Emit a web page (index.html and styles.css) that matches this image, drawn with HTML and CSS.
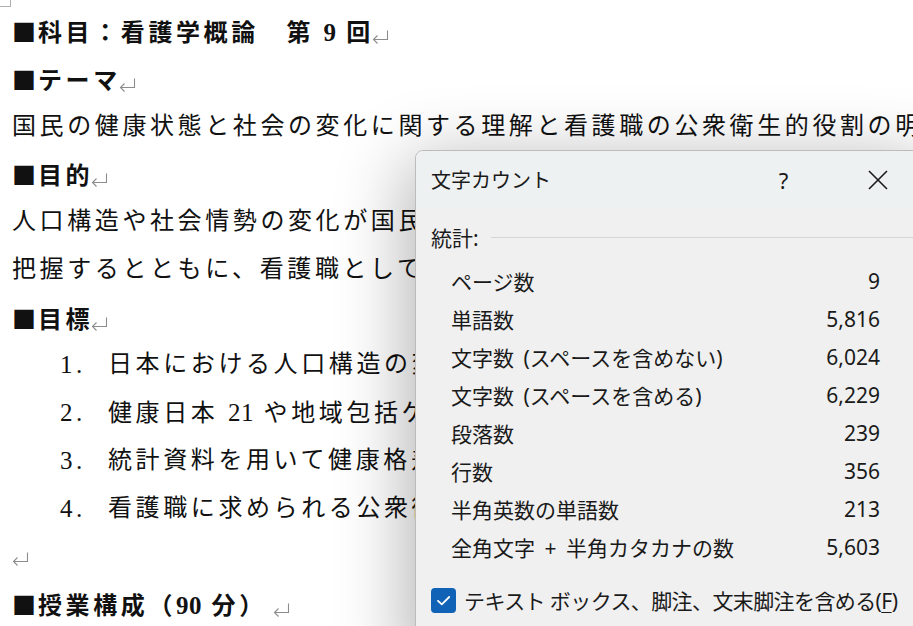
FILE: index.html
```html
<!DOCTYPE html>
<html lang="ja">
<head>
    <meta charset="UTF-8">
    <title>文字カウント</title>
    <link rel="stylesheet" href="styles.css">
</head>
<body>

    <svg width="0" height="0" class="defs">
        <symbol id="pm" viewBox="0 0 17 14">
            <path d="M15.5 0.5 V9.5 H1.5 M5.5 5.5 L1.5 9.5 L5.5 13.5" stroke="#8c8c8c" stroke-width="1.1" fill="none"/>
        </symbol>
    </svg>

    <div class="page">
        <span class="crop"></span>

        <p class="head"><span class="sq">■</span>科目：看護学概論　第 <span class="lat">9</span> 回<svg class="pm"><use href="#pm"/></svg></p>
        <p class="head"><span class="sq">■</span>テーマ<svg class="pm"><use href="#pm"/></svg></p>
        <p>国民の健康状態と社会の変化に関する理解と看護職の公衆衛生的役割の明確化<svg class="pm"><use href="#pm"/></svg></p>
        <p class="head"><span class="sq">■</span>目的<svg class="pm"><use href="#pm"/></svg></p>
        <p>人口構造や社会情勢の変化が国民の健康に及ぼす影響を統計資料から読み取り、</p>
        <p>把握するとともに、看護職としての役割を考察する。<svg class="pm"><use href="#pm"/></svg></p>
        <p class="head"><span class="sq">■</span>目標<svg class="pm"><use href="#pm"/></svg></p>

        <ol class="goals">
            <li><span class="num">1.</span><span>日本における人口構造の変化と健康課題を説明できる。<svg class="pm"><use href="#pm"/></svg></span></li>
            <li><span class="num">2.</span><span>健康日本 <span class="lat">21</span> や地域包括ケアシステムの概要を理解する。<svg class="pm"><use href="#pm"/></svg></span></li>
            <li><span class="num">3.</span><span>統計資料を用いて健康格差について考察できる。<svg class="pm"><use href="#pm"/></svg></span></li>
            <li><span class="num">4.</span><span>看護職に求められる公衆衛生的役割を述べることができる。<svg class="pm"><use href="#pm"/></svg></span></li>
        </ol>

        <p><svg class="pm first"><use href="#pm"/></svg></p>
        <p class="head"><span class="sq">■</span>授業構成（<span class="lat">90</span> 分）<svg class="pm gap"><use href="#pm"/></svg></p>
    </div>

    <!-- 文字カウント dialog -->
    <div class="dialog">
        <div class="titlebar">
            <span class="title">文字カウント</span>
            <span class="tbtn help">?</span>
            <span class="tbtn close">
                <svg width="20" height="20" viewBox="0 0 20 20">
                    <path d="M1 1 L19 19 M19 1 L1 19" stroke="#1a1a1a" stroke-width="1.6" fill="none"/>
                </svg>
            </span>
        </div>

        <div class="dbody">
            <div class="group">
                <span>統計:</span>
                <span class="rule"></span>
            </div>

            <div class="stats">
                <span>ページ数</span><span class="val">9</span>
                <span>単語数</span><span class="val">5,816</span>
                <span>文字数 (スペースを含めない)</span><span class="val">6,024</span>
                <span>文字数 (スペースを含める)</span><span class="val">6,229</span>
                <span>段落数</span><span class="val">239</span>
                <span>行数</span><span class="val">356</span>
                <span>半角英数の単語数</span><span class="val">213</span>
                <span>全角文字 + 半角カタカナの数</span><span class="val">5,603</span>
            </div>

            <label class="check">
                <span class="box">
                    <svg width="25" height="25" viewBox="0 0 25 25">
                        <path d="M7 12.8 L10.8 16.4 L18.2 9" stroke="#fff" stroke-width="1.8" fill="none" stroke-linecap="round" stroke-linejoin="round"/>
                    </svg>
                </span>
                <span class="cl">テキスト ボックス、脚注、文末脚注を含める(<u>F</u>)</span>
            </label>
        </div>
    </div>

</body>
</html>
```

FILE: styles.css
```css
html, body {
    margin: 0;
    height: 100%;
}

body {
    background: #ffffff;
    overflow: hidden;
    position: relative;
}

.defs {
    position: absolute;
}

.page {
    padding: 7px 0 0 12px;
    font-family: "Liberation Serif", "Noto Sans CJK JP", serif;
    font-size: 24px;
    letter-spacing: 3.6px;
    color: #111;
    white-space: nowrap;
}

    .page p {
        margin: 0;
        height: 47.75px;
        line-height: 47.75px;
    }

.crop {
    position: absolute;
    left: 0;
    top: 0;
    width: 10px;
    height: 6px;
    border-right: 1px solid #b0b0b0;
    border-bottom: 1px solid #b0b0b0;
}

.head {
    font-weight: bold;
}

.sq {
    font-family: "Noto Sans CJK JP", sans-serif;
    letter-spacing: 2px;
}

.lat {
    font-size: 25px;
    letter-spacing: 0.5px;
}

.pm {
    width: 17px;
    height: 14px;
    vertical-align: -3px;
    margin-left: -2px;
}

    .pm.first {
        margin-left: 0;
    }

    .pm.gap {
        margin-left: 6px;
    }

.goals {
    list-style: none;
    margin: 0;
    padding: 0 0 0 48px;
}

    .goals li {
        display: flex;
        height: 47.75px;
        line-height: 47.75px;
    }

    .goals .num {
        width: 48px;
        flex-shrink: 0;
        font-size: 25px;
    }

/* dialog */

.dialog {
    position: absolute;
    left: 415px;
    top: 150px;
    width: 520px;
    height: 520px;
    background: #f0f0f0;
    border: 1px solid #bcbcbc;
    border-radius: 8px 8px 0 0;
    box-shadow: -8px 10px 70px rgba(0, 0, 0, 0.3);
    font-family: "Noto Sans", "Noto Sans CJK JP", sans-serif;
    color: #1a1a1a;
    overflow: hidden;
}

.titlebar {
    height: 57px;
    display: flex;
    align-items: center;
    padding: 0 13px 0 15px;
    background: #eef1f1;
}

.title {
    flex: 1;
    font-size: 20px;
}

.tbtn {
    width: 91px;
    display: flex;
    justify-content: center;
    align-items: center;
}

.help {
    font-size: 22px;
    margin-right: 3px;
}

.dbody {
    padding: 14px 0 0 15px;
    font-size: 21px;
}

.group {
    display: flex;
    align-items: center;
    height: 30px;
}

    .group .rule {
        flex: 1;
        height: 1px;
        background: #d6d6d6;
        margin-left: 12px;
    }

.stats {
    display: grid;
    grid-template-columns: 1fr auto;
    grid-auto-rows: 38px;
    align-items: center;
    width: 429px;
    margin: 10px 0 0 20px;
    word-spacing: 4px;
}

    .stats .val {
        text-align: right;
    }

.check {
    display: flex;
    align-items: center;
    gap: 8px;
    height: 38px;
    margin-top: 15px;
    white-space: nowrap;
}

    .check .box {
        width: 25px;
        height: 25px;
        flex-shrink: 0;
        border-radius: 4px;
        background: #0f62b6;
        display: flex;
    }

    .check .cl {
        letter-spacing: -0.6px;
    }

    .check u {
        text-decoration-thickness: 1px;
        text-underline-offset: 3px;
    }
```
